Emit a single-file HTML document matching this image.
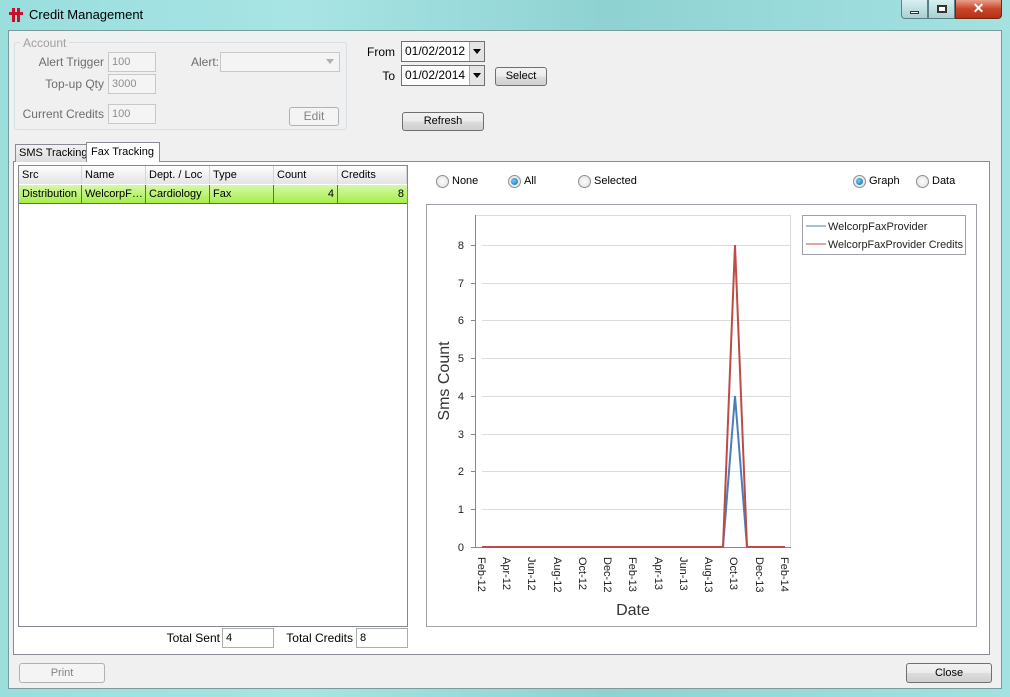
<!DOCTYPE html>
<html><head><meta charset="utf-8"><style>
*{margin:0;padding:0;box-sizing:border-box}
body{width:1010px;height:697px;overflow:hidden;font-family:"Liberation Sans",sans-serif;font-size:11px;color:#000;position:relative;background:linear-gradient(90deg,#9adede 0%,#a8e4e4 30%,#8fd2d2 60%,#a4e2e2 100%);white-space:nowrap}
.a{position:absolute}
.client{left:8px;top:30px;width:994px;height:659px;background:#f0f0f0;border:1px solid #7a9a9c}
.tb{border:1px solid #abadb3;background:#fff;padding:2px 3px;height:20px;line-height:14px;overflow:hidden}
.dis{color:#8d8d8d;background:#f4f4f4;border-color:#c8c8c8}
.btn{border:1px solid #707070;border-radius:3px;background:linear-gradient(#f2f2f2,#ebebeb 50%,#dddddd 50%,#cfcfcf);text-align:center;line-height:17px;height:19px}
.btnd{border:1px solid #adb2b5;border-radius:3px;background:#f4f4f4;color:#838383;text-align:center}
.lbl{color:#6d6d6d;text-align:right}
.rad{width:13px;height:13px;border-radius:50%;border:1px solid #8e8f8f;background:radial-gradient(#fff,#dcdcdc)}
.rad.on::after{content:"";position:absolute;left:2px;top:2px;width:7px;height:7px;border-radius:50%;background:radial-gradient(circle at 40% 40%,#6ad0ff,#0d5fa6)}
.th{top:0;height:18px;line-height:18px;padding-left:3px;border-right:1px solid #d5d5d5;background:linear-gradient(#fff,#f0f0f0 50%,#e4e4e4);overflow:hidden}
.td{top:0;height:18px;line-height:18px;padding-left:3px;border-right:1px solid #5a7a3a;overflow:hidden}
</style></head><body>
<!-- title -->
<div class="a" style="left:9px;top:8px;width:14px;height:14px">
<div class="a" style="left:3px;top:0;width:3px;height:14px;background:#c8102e"></div>
<div class="a" style="left:8px;top:0;width:3px;height:14px;background:#c8102e"></div>
<div class="a" style="left:0;top:4px;width:14px;height:3px;background:#c8102e"></div>
</div>
<div class="a" style="left:29px;top:7px;font-size:13px">Credit Management</div>
<div class="a" style="left:901px;top:0;width:27px;height:19px;border:1px solid #5a7f84;border-top:none;border-radius:0 0 0 4px;background:linear-gradient(#d8f0f2,#a8d0d4)"><div class="a" style="left:8px;top:11px;width:9px;height:3px;background:#fff;border:1px solid #333"></div></div>
<div class="a" style="left:928px;top:0;width:27px;height:19px;border:1px solid #5a7f84;border-top:none;background:linear-gradient(#d8f0f2,#a8d0d4)"><div class="a" style="left:8px;top:5px;width:10px;height:8px;border:2px solid #333;background:#fff"></div></div>
<div class="a" style="left:955px;top:0;width:47px;height:19px;border:1px solid #6a2a1a;border-top:none;border-radius:0 0 4px 0;background:linear-gradient(#e8a08a,#c8452a 50%,#b83012);color:#fff;font-weight:bold;text-align:center;font-size:14px;line-height:17px">✕</div>

<div class="a client"></div>
<!-- Account group -->
<div class="a" style="left:14px;top:42px;width:333px;height:88px;border:1px solid #d5dfe5;border-radius:3px"></div>
<div class="a lbl" style="left:20px;top:36px;background:#f0f0f0;padding:0 3px;color:#a0a0a0;font-size:12px">Account</div>
<div class="a lbl" style="right:906px;top:55px;font-size:12px">Alert Trigger</div>
<div class="a tb dis" style="left:108px;top:52px;width:48px">100</div>
<div class="a lbl" style="right:906px;top:77px;font-size:12px">Top-up Qty</div>
<div class="a tb dis" style="left:108px;top:74px;width:48px">3000</div>
<div class="a lbl" style="right:906px;top:107px;font-size:12px">Current Credits</div>
<div class="a tb dis" style="left:108px;top:104px;width:48px">100</div>
<div class="a lbl" style="right:791px;top:55px;font-size:12px">Alert:</div>
<div class="a tb dis" style="left:220px;top:52px;width:120px"><span class="a" style="right:5px;top:6px;border:4px solid transparent;border-top:5px solid #b0b0b0"></span></div>
<div class="a btnd" style="left:289px;top:107px;width:50px;height:19px;line-height:17px;font-size:12px">Edit</div>
<!-- dates -->
<div class="a" style="right:615px;top:45px;font-size:12px">From</div>
<div class="a tb" style="left:401px;top:41px;width:84px;height:21px;border-color:#707070;font-size:12px">01/02/2012<span class="a" style="right:0;top:0;width:15px;height:19px;background:#e4e4e4;border-left:1px solid #aaa"><span class="a" style="left:3px;top:7px;border:4px solid transparent;border-top:5px solid #000"></span></span></div>
<div class="a" style="right:615px;top:69px;font-size:12px">To</div>
<div class="a tb" style="left:401px;top:65px;width:84px;height:21px;border-color:#707070;font-size:12px">01/02/2014<span class="a" style="right:0;top:0;width:15px;height:19px;background:#e4e4e4;border-left:1px solid #aaa"><span class="a" style="left:3px;top:7px;border:4px solid transparent;border-top:5px solid #000"></span></span></div>
<div class="a btn" style="left:495px;top:67px;width:52px">Select</div>
<div class="a btn" style="left:402px;top:112px;width:82px">Refresh</div>
<!-- tabs -->
<div class="a" style="left:13px;top:161px;width:977px;height:494px;border:1px solid #898c95;background:#fff"></div>
<div class="a" style="left:15px;top:144px;width:72px;height:18px;border:1px solid #898c95;border-bottom:none;background:linear-gradient(#f2f2f2,#dcdcdc);line-height:17px;padding-left:3px">SMS Tracking</div>
<div class="a" style="left:86px;top:142px;width:74px;height:20px;border:1px solid #898c95;border-bottom:none;background:#fff;line-height:18px;padding-left:4px">Fax Tracking</div>
<!-- grid -->
<div class="a" style="left:18px;top:165px;width:390px;height:462px;border:1px solid #828790;background:#fff">
 <div class="a" style="left:0;top:0;width:388px;height:18px">
  <div class="a th" style="left:0;width:63px">Src</div>
  <div class="a th" style="left:63px;width:64px">Name</div>
  <div class="a th" style="left:127px;width:64px">Dept. / Loc</div>
  <div class="a th" style="left:191px;width:64px">Type</div>
  <div class="a th" style="left:255px;width:64px">Count</div>
  <div class="a th" style="left:319px;width:69px">Credits</div>
 </div>
 <div class="a" style="left:0;top:19px;width:388px;height:19px;background:linear-gradient(#d6f8a8,#a6ee4a);border-bottom:1px solid #5a7a3a">
  <div class="a td" style="left:0;width:63px">Distribution</div>
  <div class="a td" style="left:63px;width:64px">WelcorpF…</div>
  <div class="a td" style="left:127px;width:64px">Cardiology</div>
  <div class="a td" style="left:191px;width:64px">Fax</div>
  <div class="a td" style="left:255px;width:64px;text-align:right;padding-right:3px">4</div>
  <div class="a td" style="left:319px;width:69px;text-align:right;padding-right:3px;border:none">8</div>
 </div>
</div>
<div class="a" style="right:790px;top:631px;font-size:12px">Total Sent</div>
<div class="a tb" style="left:222px;top:628px;width:52px">4</div>
<div class="a" style="right:657px;top:631px;font-size:12px">Total Credits</div>
<div class="a tb" style="left:356px;top:628px;width:52px">8</div>
<!-- radios -->
<div class="a rad" style="left:436px;top:175px"></div><div class="a" style="left:452px;top:175px">None</div>
<div class="a rad on" style="left:508px;top:175px"></div><div class="a" style="left:524px;top:175px">All</div>
<div class="a rad" style="left:578px;top:175px"></div><div class="a" style="left:594px;top:175px">Selected</div>
<div class="a rad on" style="left:853px;top:175px"></div><div class="a" style="left:869px;top:175px">Graph</div>
<div class="a rad" style="left:916px;top:175px"></div><div class="a" style="left:932px;top:175px">Data</div>
<!-- chart -->
<div class="a" style="left:426px;top:204px;width:551px;height:423px;border:1px solid #a0a0a8;background:#fff"></div>
<svg class="a" style="left:0;top:0" width="1010" height="697">
<g stroke="#dcdcdc" stroke-width="1">
<line x1="482" y1="245.5" x2="790" y2="245.5"/><line x1="482" y1="283.5" x2="790" y2="283.5"/><line x1="482" y1="320.5" x2="790" y2="320.5"/><line x1="482" y1="358.5" x2="790" y2="358.5"/><line x1="482" y1="396.5" x2="790" y2="396.5"/><line x1="482" y1="434.5" x2="790" y2="434.5"/><line x1="482" y1="471.5" x2="790" y2="471.5"/><line x1="482" y1="509.5" x2="790" y2="509.5"/>
<line x1="790.5" y1="215" x2="790.5" y2="547"/><line x1="476" y1="215.5" x2="790" y2="215.5"/>
</g>
<line x1="475.5" y1="215" x2="475.5" y2="548" stroke="#888"/>
<line x1="475" y1="547.5" x2="791" y2="547.5" stroke="#888"/>
<g stroke="#888"><line x1="471" y1="245.5" x2="475" y2="245.5"/><line x1="471" y1="283.5" x2="475" y2="283.5"/><line x1="471" y1="320.5" x2="475" y2="320.5"/><line x1="471" y1="358.5" x2="475" y2="358.5"/><line x1="471" y1="396.5" x2="475" y2="396.5"/><line x1="471" y1="434.5" x2="475" y2="434.5"/><line x1="471" y1="471.5" x2="475" y2="471.5"/><line x1="471" y1="509.5" x2="475" y2="509.5"/><line x1="471" y1="547.5" x2="475" y2="547.5"/></g>
<polyline points="482,547 723,547 735,396 747,547 785,547" fill="none" stroke="#4a7ebb" stroke-width="2"/>
<polyline points="482,547 723,547 735,245 747,547 785,547" fill="none" stroke="#be4b48" stroke-width="2"/>
<g font-family="Liberation Sans,sans-serif" font-size="11" fill="#222" text-anchor="end">
<text x="464" y="249">8</text><text x="464" y="287">7</text><text x="464" y="324">6</text><text x="464" y="362">5</text><text x="464" y="400">4</text><text x="464" y="438">3</text><text x="464" y="475">2</text><text x="464" y="513">1</text><text x="464" y="551">0</text>
</g>
<g font-family="Liberation Sans,sans-serif" font-size="11" fill="#222">
<text transform="translate(478,557) rotate(90)">Feb-12</text><text transform="translate(503,557) rotate(90)">Apr-12</text><text transform="translate(528,557) rotate(90)">Jun-12</text><text transform="translate(554,557) rotate(90)">Aug-12</text><text transform="translate(579,557) rotate(90)">Oct-12</text><text transform="translate(604,557) rotate(90)">Dec-12</text><text transform="translate(629,557) rotate(90)">Feb-13</text><text transform="translate(655,557) rotate(90)">Apr-13</text><text transform="translate(680,557) rotate(90)">Jun-13</text><text transform="translate(705,557) rotate(90)">Aug-13</text><text transform="translate(730,557) rotate(90)">Oct-13</text><text transform="translate(756,557) rotate(90)">Dec-13</text><text transform="translate(781,557) rotate(90)">Feb-14</text>
</g>
<text x="633" y="615" font-family="Liberation Sans,sans-serif" font-size="16" fill="#333" text-anchor="middle">Date</text>
<text transform="translate(449,381) rotate(-90)" font-family="Liberation Sans,sans-serif" font-size="16" fill="#333" text-anchor="middle">Sms Count</text>
<rect x="802.5" y="215.5" width="163" height="39" fill="#fff" stroke="#a0a0a8"/>
<line x1="806" y1="226" x2="826" y2="226" stroke="#4a7ebb"/>
<line x1="806" y1="244" x2="826" y2="244" stroke="#be4b48"/>
<g font-family="Liberation Sans,sans-serif" font-size="11" fill="#222"><text x="828" y="230">WelcorpFaxProvider</text><text x="828" y="248" textLength="135" lengthAdjust="spacingAndGlyphs">WelcorpFaxProvider Credits</text></g>
</svg>
<!-- bottom -->
<div class="a btnd" style="left:19px;top:663px;width:86px;height:20px;line-height:18px">Print</div>
<div class="a btn" style="left:906px;top:663px;width:86px;height:20px;line-height:18px">Close</div>
</body></html>
